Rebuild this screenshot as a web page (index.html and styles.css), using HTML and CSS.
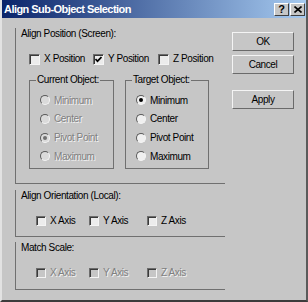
FILE: index.html
```html
<!DOCTYPE html>
<html lang="en">
<head>
  <meta charset="UTF-8">
  <meta name="viewport" content="width=device-width, initial-scale=1.0">
  <title>Align Sub-Object Selection</title>
  <link rel="stylesheet" href="styles.css">
</head>
<body>
<div class="window">
  <div class="titlebar">
    <span class="title">Align Sub-Object Selection</span>
    <div class="title-buttons">
      <span class="tbtn">?</span>
      <span class="tbtn">
        <svg width="8" height="7" viewBox="0 0 8 7"><path d="M0.5 0.5 L7.5 6.5 M7.5 0.5 L0.5 6.5" stroke="#000" stroke-width="1.6"/></svg>
      </span>
    </div>
  </div>

  <div class="main">
    <div class="groups">
      <div class="group group-position">
        <div class="group-label">Align Position (Screen):</div>
        <div class="check-row pos-row">
          <span class="check"><span class="box big"></span>X Position</span>
          <span class="check"><span class="box big"><svg width="7" height="7" viewBox="0 0 7 7"><path d="M0.5 3 L2.5 5.2 L6.5 1" stroke="#000" stroke-width="1.7" fill="none"/></svg></span>Y Position</span>
          <span class="check"><span class="box big"></span>Z Position</span>
        </div>
        <div class="sub-row">
          <div class="subgroup current">
            <div class="legend">Current Object:</div>
            <ul class="radios">
              <li class="off"><span class="radio"></span>Minimum</li>
              <li class="off"><span class="radio"></span>Center</li>
              <li class="off"><span class="radio on"></span>Pivot Point</li>
              <li class="off"><span class="radio"></span>Maximum</li>
            </ul>
          </div>
          <div class="subgroup target">
            <div class="legend">Target Object:</div>
            <ul class="radios">
              <li><span class="radio on"></span>Minimum</li>
              <li><span class="radio"></span>Center</li>
              <li><span class="radio"></span>Pivot Point</li>
              <li><span class="radio"></span>Maximum</li>
            </ul>
          </div>
        </div>
      </div>

      <div class="group group-orient">
        <div class="group-label">Align Orientation (Local):</div>
        <div class="check-row axis-row">
          <span class="check"><span class="box"></span>X Axis</span>
          <span class="check"><span class="box"></span>Y Axis</span>
          <span class="check"><span class="box"></span>Z Axis</span>
        </div>
      </div>

      <div class="group group-scale">
        <div class="group-label">Match Scale:</div>
        <div class="check-row axis-row">
          <span class="check off"><span class="box"></span>X Axis</span>
          <span class="check off"><span class="box"></span>Y Axis</span>
          <span class="check off"><span class="box"></span>Z Axis</span>
        </div>
      </div>
    </div>

    <div class="buttons">
      <span class="btn">OK</span>
      <span class="btn btn-cancel">Cancel</span>
      <span class="btn btn-apply">Apply</span>
    </div>
  </div>
</div>
</body>
</html>
```

FILE: styles.css
```css
body {
  margin: 0;
  font-family: "Liberation Sans", Arial, sans-serif;
  font-size: 10px;
  letter-spacing: -0.4px;
  color: #000;
  background-color: #c6c6c6;
}
.window {
  width: 308px;
  height: 302px;
  box-sizing: border-box;
  background-color: #c6c6c6;
  border-left: 2px solid #e2e2e2;
  border-right: 2px solid #5a5a5a;
  border-bottom: 2px solid #3c3c3c;
}
.titlebar {
  height: 18px;
  display: flex;
  align-items: center;
  justify-content: space-between;
  padding: 0 1px 0 2px;
  background: linear-gradient(to right, #0a246a, #a6caf0);
}
.title {
  color: #fff;
  font-weight: bold;
  font-size: 11px;
  letter-spacing: -0.55px;
}
.title-buttons {
  display: flex;
  gap: 1px;
}
.tbtn {
  width: 15px;
  height: 13px;
  box-sizing: border-box;
  background-color: #c6c6c6;
  border: 1px solid;
  border-color: #fff #404040 #404040 #fff;
  display: flex;
  align-items: center;
  justify-content: center;
  font-weight: bold;
  font-size: 11px;
  line-height: 11px;
}
.main {
  display: flex;
  align-items: flex-start;
  padding-left: 13px;
}
.groups {
  width: 210px;
}
.group {
  border-left: 1px solid #707070;
  border-bottom: 1px solid #707070;
}
.group-label {
  margin: -3px 0 0 5px;
  line-height: 12px;
}
.group-position {
  margin-top: 13px;
  padding-bottom: 14px;
}
.group-orient {
  margin-top: 9px;
  padding-bottom: 11px;
}
.group-scale {
  margin-top: 8px;
  padding-bottom: 12px;
}
.check-row {
  display: grid;
  margin-top: 13px;
}
.pos-row {
  grid-template-columns: 64px 65px auto;
  padding-left: 13px;
  height: 11px;
}
.axis-row {
  grid-template-columns: 53px 58px auto;
  padding-left: 20px;
  height: 10px;
}
.check {
  display: flex;
  align-items: center;
  gap: 4px;
  line-height: 12px;
}
.box {
  width: 10px;
  height: 10px;
  box-sizing: border-box;
  border: 1px solid;
  border-color: #6c6c6c #f4f4f4 #f4f4f4 #6c6c6c;
  box-shadow: inset 1px 1px 0 #3a3a3a;
  background-color: #ececec;
  display: flex;
  align-items: center;
  justify-content: center;
  flex-shrink: 0;
}
.box.big {
  width: 11px;
  height: 11px;
}
.off {
  color: #808080;
  text-shadow: 1px 1px 0 #f4f4f4;
}
.off .box {
  background-color: #c6c6c6;
}
.sub-row {
  display: flex;
  gap: 11px;
  margin-top: 16px;
  padding-left: 13px;
}
.subgroup {
  height: 89px;
  box-sizing: border-box;
  border: 1px solid #707070;
}
.current {
  width: 85px;
}
.target {
  width: 84px;
}
.legend {
  width: fit-content;
  margin: -7px 0 0 6px;
  padding: 0 1px;
  line-height: 12px;
  background-color: #c6c6c6;
}
.radios {
  list-style: none;
  margin: 5px 0 0;
  padding: 0 0 0 10px;
}
.radios li {
  height: 18.67px;
  display: flex;
  align-items: center;
  gap: 4px;
}
.radio {
  width: 10px;
  height: 10px;
  box-sizing: border-box;
  border-radius: 50%;
  border: 1px solid;
  border-color: #5a5a5a #f4f4f4 #f4f4f4 #5a5a5a;
  background-color: #f0f0f0;
  display: flex;
  align-items: center;
  justify-content: center;
  flex-shrink: 0;
}
.off .radio {
  background-color: #dadada;
}
.radio.on::after {
  content: "";
  width: 4px;
  height: 4px;
  border-radius: 50%;
  background-color: #000;
}
.off .radio.on::after {
  background-color: #707070;
}
.buttons {
  width: 62px;
  margin: 14px 0 0 7px;
  display: flex;
  flex-direction: column;
}
.btn {
  height: 19px;
  box-sizing: border-box;
  border: 1px solid;
  border-color: #f4f4f4 #6a6a6a #6a6a6a #f4f4f4;
  display: flex;
  align-items: center;
  justify-content: center;
}
.btn-cancel {
  margin-top: 4px;
}
.btn-apply {
  margin-top: 16px;
}
```
